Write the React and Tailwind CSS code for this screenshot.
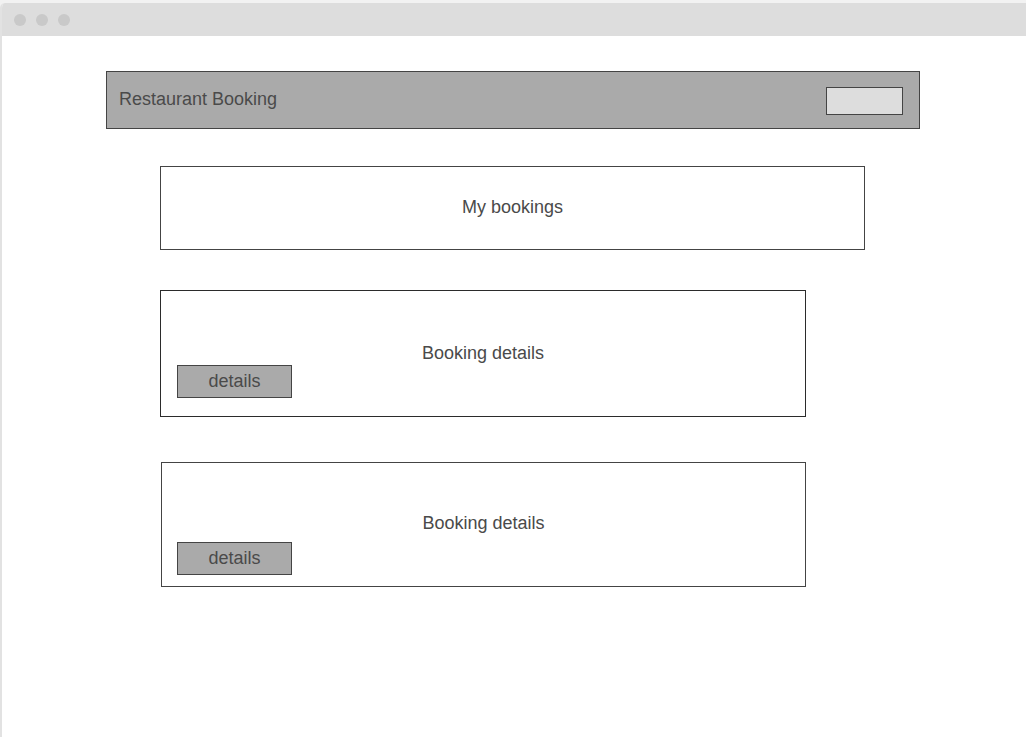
import React from 'react';

const bookings = [
  { id: 1, wrap: 'ml-[158px] mt-[40px] h-[127px] w-[646px] border-[#2b2b2b]', text: 'pt-[52px]', btn: 'mt-[2px] ml-[16px]' },
  { id: 2, wrap: 'ml-[159px] mt-[45px] h-[125px] w-[645px] border-[#444444]', text: 'pt-[50px]', btn: 'mt-[9px] ml-[15px]' },
];

const BookingCard = ({ item }) => (
  <div className={`flex flex-col border bg-white ${item.wrap}`}>
    <div className={`text-center text-[18px] leading-[20px] text-[#4a4a4a] ${item.text}`}>Booking details</div>
    <button
      type="button"
      className={`h-[33px] w-[115px] border border-[#444444] bg-[#aaaaaa] pb-[2px] text-[18px] leading-[20px] text-[#4a4a4a] ${item.btn}`}
    >
      details
    </button>
  </div>
);

export default function App() {
  return (
    <div
      className="flex h-[737px] w-[1026px] flex-col overflow-hidden bg-[#f2f2f2] pt-[3px]"
      style={{ fontFamily: '"Liberation Sans", Arial, sans-serif' }}
    >
      <div className="flex flex-1 flex-col overflow-hidden rounded-tl-[5px] border-l-2 border-[#e2e2e2] bg-white">
        {/* Browser chrome */}
        <div className="flex h-[33px] shrink-0 items-center gap-[10px] bg-[#dddddd] pl-[12px]">
          <span className="h-[12px] w-[12px] rounded-full bg-[#c9c9c9]" />
          <span className="h-[12px] w-[12px] rounded-full bg-[#c9c9c9]" />
          <span className="h-[12px] w-[12px] rounded-full bg-[#c9c9c9]" />
        </div>

        {/* Page body */}
        <div className="flex flex-col">
          <div className="ml-[104px] mt-[35px] flex h-[58px] w-[814px] items-center justify-between border border-[#444444] bg-[#aaaaaa] pl-[12px] pr-[16px]">
            <span className="pb-[2px] text-[18px] leading-[20px] text-[#4a4a4a]">Restaurant Booking</span>
            <button type="button" className="mt-[1px] h-[28px] w-[77px] border border-[#444444] bg-[#dddddd]" />
          </div>

          <div className="ml-[158px] mt-[37px] flex h-[84px] w-[705px] items-center justify-center border border-[#444444]">
            <span className="pb-[2px] text-[18px] leading-[20px] text-[#4a4a4a]">My bookings</span>
          </div>

          {bookings.map((item) => (
            <BookingCard key={item.id} item={item} />
          ))}
        </div>
      </div>
    </div>
  );
}
